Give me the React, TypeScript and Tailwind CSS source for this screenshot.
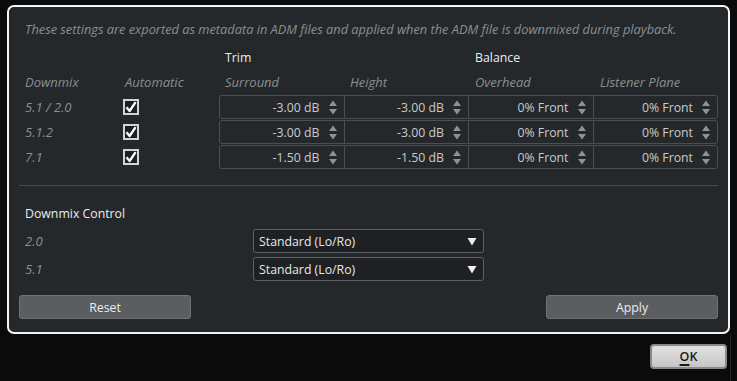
import React from "react";

function Arrows() {
  return (
    <svg width="8" height="15" viewBox="0 0 8 15" className="shrink-0">
      <path d="M4 0.5 L8 6 L0 6 Z" fill="#8e9195" />
      <path d="M0 9 L8 9 L4 14.5 Z" fill="#8e9195" />
    </svg>
  );
}

function Check() {
  return (
    <div className="w-[16px] h-[16px] border-2 border-[#d4d4d4] bg-[#1c1e21] flex items-center justify-center">
      <svg width="12" height="12" viewBox="0 0 12 12">
        <path d="M1.5 6.2 L4.6 10 L10.6 1.2" stroke="#ffffff" strokeWidth="2.3" fill="none" strokeLinejoin="round" />
      </svg>
    </div>
  );
}

function Cell({ value, first }: { value: string; first?: boolean }) {
  return (
    <div className={`flex-1 flex items-center justify-end pr-[7px] gap-[9px] ${first ? "" : "border-l border-[#4b4e52]"}`}>
      <span className="pt-[2px] text-[12.3px] text-[#c9cacc]">{value}</span>
      <Arrows />
    </div>
  );
}

function Row({ label, trim }: { label: string; trim: string }) {
  return (
    <div className="flex h-[24px] items-center">
      <div className="w-[104px] pl-[6px] italic text-[13px] text-[#8b8e92]">{label}</div>
      <div className="w-[96px] flex items-center">
        <Check />
      </div>
      <div className="w-[499px] h-[24px] border border-[#4b4e52] rounded-[3px] flex">
        <Cell value={trim} first />
        <Cell value={trim} />
        <Cell value="0% Front" />
        <Cell value="0% Front" />
      </div>
    </div>
  );
}

function Dropdown() {
  return (
    <div className="w-[231px] h-[24px] border border-[#5d6064] rounded-[3px] bg-[#1e2023] flex items-center justify-between pl-[5px] pr-[6px]">
      <span className="pt-[2px] text-[12.3px] text-[#e8e8e8]">Standard (Lo/Ro)</span>
      <svg width="10" height="9" viewBox="0 0 10 9">
        <path d="M0.5 1 L9.5 1 L5 8.5 Z" fill="#f0f0f0" />
      </svg>
    </div>
  );
}

export default function App() {
  return (
    <div className="w-[737px] h-[381px] bg-[#0b0b0b] flex flex-col overflow-hidden font-['Open_Sans',sans-serif] leading-[18px]">
      <div className="ml-[7px] mt-[5px] w-[723px] h-[329px] shrink-0 border-2 border-[#f4f4f4] rounded-[7px] bg-[#25282b] px-[10px] pt-[13px] flex flex-col">
        <div className="pl-[6px] italic text-[12.8px] text-[#8b8e92] h-[18px] whitespace-nowrap">
          These settings are exported as metadata in ADM files and applied when the ADM file is downmixed during playback.
        </div>
        <div className="mt-[11px] h-[18px] flex text-[12.3px] text-[#ececec]">
          <div className="w-[206px]" />
          <div className="w-[250px]">Trim</div>
          <div>Balance</div>
        </div>
        <div className="mt-[6px] h-[18px] pl-[6px] flex italic text-[13px] text-[#8b8e92]">
          <div className="w-[100px]">Downmix</div>
          <div className="w-[100px]">Automatic</div>
          <div className="w-[125px]">Surround</div>
          <div className="w-[125px]">Height</div>
          <div className="w-[125px]">Overhead</div>
          <div>Listener Plane</div>
        </div>
        <div className="mt-[4px] flex flex-col gap-[1px]">
          <Row label="5.1 / 2.0" trim="-3.00 dB" />
          <Row label="5.1.2" trim="-3.00 dB" />
          <Row label="7.1" trim="-1.50 dB" />
        </div>
        <div className="mt-[16px] h-px w-[699px] bg-[#46494d]" />
        <div className="mt-[19px] h-[18px] pl-[6px] text-[12.3px] text-[#ececec]">Downmix Control</div>
        <div className="mt-[6px] flex flex-col gap-[4px]">
          <div className="flex items-center">
            <div className="w-[234px] pl-[6px] italic text-[13px] text-[#8b8e92]">2.0</div>
            <Dropdown />
          </div>
          <div className="flex items-center">
            <div className="w-[234px] pl-[6px] italic text-[13px] text-[#8b8e92]">5.1</div>
            <Dropdown />
          </div>
        </div>
        <div className="mt-[14px] flex justify-between w-[699px]">
          <button className="w-[172px] h-[24px] pt-[2px] bg-[#5b5d61] border border-[#707276] rounded-[3px] text-[12.3px] text-[#ececec]">Reset</button>
          <button className="w-[172px] h-[24px] pt-[2px] bg-[#5b5d61] border border-[#707276] rounded-[3px] text-[12.3px] text-[#ececec]">Apply</button>
        </div>
      </div>
      <div className="w-[731px] flex-1 border-r border-[#262626] flex justify-end pr-[3px] pt-[10px]">
        <button className="w-[77px] h-[25px] rounded-[4px] border-2 border-[#8a8a8a] bg-gradient-to-b from-[#e2e2e2] to-[#c6c6c6] text-[12.5px] font-semibold text-[#1a1a1a] flex items-center justify-center">
          <span><span className="underline decoration-2 underline-offset-[3px]">O</span>K</span>
        </button>
      </div>
    </div>
  );
}
